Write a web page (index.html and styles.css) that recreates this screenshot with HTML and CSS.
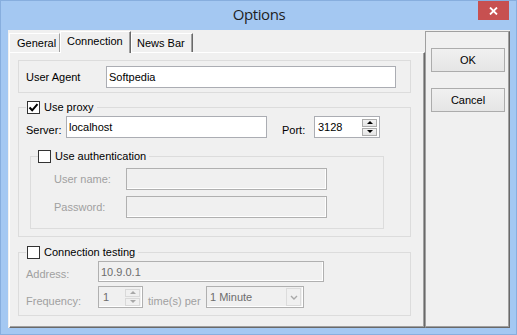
FILE: index.html
```html
<!DOCTYPE html>
<html lang="en">
<head>
    <meta charset="UTF-8">
    <title>Options</title>
    <link rel="stylesheet" href="styles.css">
</head>
<body>
    <div class="window">
        <div class="titlebar">
            <span></span>
            <span class="title">Options</span>
            <button class="close-btn" type="button">
                <svg width="9" height="8" viewBox="0 0 9 8"><path d="M1 0.5L8 7.5M8 0.5L1 7.5" stroke="#fff" stroke-width="1.8" fill="none"/></svg>
            </button>
        </div>
        <div class="client">
            <div class="tabctl">
                <div class="tabstrip">
                    <div class="tab tab-general">General</div>
                    <div class="tab tab-active">Connection</div>
                    <div class="tab tab-news">News Bar</div>
                </div>
                <div class="page">
                    <div class="ua-group">
                        <label class="ua-label" for="ua">User Agent</label>
                        <input class="text ua-input" id="ua" value="Softpedia">
                    </div>

                    <fieldset class="group proxy-group">
                        <legend>
                            <span class="check">
                                <svg width="11" height="11" viewBox="0 0 11 11"><path d="M1.5 5.5L4.2 8.3L9.5 2.2" stroke="#000" stroke-width="2" fill="none"/></svg>
                            </span>Use proxy
                        </legend>
                        <div class="row">
                            <label class="lbl low server-label">Server:</label>
                            <input class="text server-input" value="localhost">
                            <label class="lbl low port-label">Port:</label>
                            <div class="spin port-spin">
                                <input value="3128">
                                <div class="spin-btns">
                                    <span class="spin-btn"><i class="arrow-up"></i></span>
                                    <span class="spin-btn"><i class="arrow-down"></i></span>
                                </div>
                            </div>
                        </div>

                        <fieldset class="group auth-group">
                            <legend><span class="check"></span>Use authentication</legend>
                            <div class="row">
                                <label class="lbl dis auth-label">User name:</label>
                                <input class="text disabled auth-input" disabled>
                            </div>
                            <div class="row auth-row">
                                <label class="lbl dis auth-label">Password:</label>
                                <input class="text disabled auth-input" disabled>
                            </div>
                        </fieldset>
                    </fieldset>

                    <fieldset class="group test-group">
                        <legend><span class="check"></span>Connection testing</legend>
                        <div class="row addr-row">
                            <label class="lbl dis test-label addr-label">Address:</label>
                            <input class="text disabled addr-input" value="10.9.0.1" disabled>
                        </div>
                        <div class="row freq-row">
                            <label class="lbl dis test-label freq-label">Frequency:</label>
                            <div class="spin disabled freq-spin">
                                <input value="1" disabled>
                                <div class="spin-btns">
                                    <span class="spin-btn"><i class="arrow-up"></i></span>
                                    <span class="spin-btn"><i class="arrow-down"></i></span>
                                </div>
                            </div>
                            <span class="lbl dis per-label">time(s) per</span>
                            <div class="select disabled">
                                <span class="select-value">1 Minute</span>
                                <span class="drop">
                                    <svg width="8" height="5" viewBox="0 0 8 5"><path d="M1 1L4 4L7 1" stroke="#a8a8a8" stroke-width="1.4" fill="none"/></svg>
                                </span>
                            </div>
                        </div>
                    </fieldset>
                </div>
            </div>
            <div class="side">
                <button class="btn" type="button">OK</button>
                <button class="btn" type="button">Cancel</button>
            </div>
        </div>
    </div>
</body>
</html>
```

FILE: styles.css
```css
* {
    box-sizing: border-box;
}
body {
    margin: 0;
    font-family: "Liberation Sans", Arial, sans-serif;
    font-size: 11px;
    color: #000;
}
.window {
    width: 517px;
    height: 335px;
    background-color: #a4c8f2;
    border: 1px solid #87aede;
    padding: 0 6px 6px 7px;
    display: flex;
    flex-direction: column;
}
.titlebar {
    height: 29px;
    display: grid;
    grid-template-columns: 1fr auto 1fr;
    align-items: start;
}
.title {
    font-family: "Open Sans", "Noto Sans", sans-serif;
    font-size: 15px;
    letter-spacing: -0.4px;
    line-height: 27px;
    color: #1e1e1e;
}
.close-btn {
    justify-self: end;
    width: 31px;
    height: 19px;
    margin-right: 1px;
    border: none;
    padding: 0;
    background-color: #c75050;
    display: flex;
    align-items: center;
    justify-content: center;
}
.client {
    flex: 1;
    background-color: #f0f0f0;
    display: flex;
    padding: 1px 0 0 1px;
}

/* tabs */
.tabctl {
    width: 416px;
    display: flex;
    flex-direction: column;
}
.tabstrip {
    height: 21px;
    display: flex;
    align-items: flex-end;
}
.tab {
    height: 19px;
    line-height: 18px;
    background-color: #f0f0f0;
    border-top: 1px solid #fff;
    border-left: 1px solid #fff;
    border-right: 1px solid #a0a0a0;
}
.tab-general {
    width: 51px;
    padding-left: 7px;
}
.tab-active {
    position: relative;
    z-index: 1;
    width: 71px;
    height: 22px;
    margin-bottom: -1px;
    padding-left: 6px;
    line-height: 19px;
    border-right: 1px solid #696969;
    box-shadow: inset -1px 0 0 #a0a0a0;
}
.tab-news {
    width: 62px;
    padding-left: 5px;
    border-right: 1px solid #696969;
    box-shadow: inset -1px 0 0 #a0a0a0;
}
.page {
    flex: 1;
    border-top: 1px solid #fff;
    border-left: 1px solid #fff;
    border-right: 1px solid #696969;
    border-bottom: 1px solid #696969;
    box-shadow: inset -1px -1px 0 #a0a0a0;
    padding: 7px 13px 0 8px;
    display: flex;
    flex-direction: column;
}

/* inputs */
.text {
    height: 22px;
    border: 1px solid #abadb3;
    background-color: #fff;
    font-family: inherit;
    font-size: 11px;
    color: #000;
    padding: 0 2px;
    outline: none;
}
.text.disabled,
.spin.disabled,
.select.disabled {
    background-color: #f0f0f0;
    border: 1px solid #b0b0b0;
    box-shadow: inset -1px -1px 0 #fff;
    color: #6d6d6d;
}
.lbl {
    line-height: 13px;
}
.dis {
    color: #a0a0a0;
}
.row {
    display: flex;
    align-items: center;
    height: 22px;
}

/* groups */
.ua-group {
    display: flex;
    align-items: center;
    border: 1px solid #dcdcdc;
    padding: 5px 14px 4px 7px;
}
.ua-label {
    width: 80px;
}
.ua-input {
    flex: 1;
}
.group {
    margin: 0;
    min-width: 0;
    border: 1px solid #dcdcdc;
}
.group legend {
    display: flex;
    align-items: center;
    height: 14px;
    line-height: 14px;
    padding: 0 3px 0 1px;
}
.check {
    width: 13px;
    height: 13px;
    margin-right: 4px;
    border: 1px solid #333;
    background-color: #fff;
    display: flex;
    align-items: center;
    justify-content: center;
}
.proxy-group {
    margin-top: 7px;
    padding: 2px 0 7px 7px;
}
.low {
    align-self: flex-start;
    margin-top: 8px;
}
.server-label {
    width: 40px;
}
.server-input {
    width: 201px;
}
.port-label {
    width: 32px;
    margin-left: 15px;
}

/* spinners */
.spin {
    display: flex;
    align-items: center;
    height: 22px;
    border: 1px solid #abadb3;
    background-color: #fff;
    padding: 0 2px 0 2px;
}
.spin input {
    flex: 1;
    width: 0;
    border: none;
    background: transparent;
    font-family: inherit;
    font-size: 11px;
    color: inherit;
    padding: 0 1px;
    outline: none;
}
.port-spin {
    width: 66px;
}
.freq-spin {
    width: 45px;
    padding-left: 3px;
}
.spin-btns {
    display: flex;
    flex-direction: column;
    gap: 1px;
}
.spin-btn {
    width: 15px;
    height: 8px;
    border: 1px solid #acacac;
    background: linear-gradient(#f2f2f2, #e5e5e5);
    display: flex;
    align-items: center;
    justify-content: center;
}
.arrow-up {
    border-left: 3px solid transparent;
    border-right: 3px solid transparent;
    border-bottom: 3px solid #000;
}
.arrow-down {
    border-left: 3px solid transparent;
    border-right: 3px solid transparent;
    border-top: 3px solid #000;
}
.freq-spin .spin-btn {
    border-color: #d9d9d9;
    background: #f0f0f0;
}
.freq-spin .arrow-up {
    border-bottom-color: #a8a8a8;
}
.freq-spin .arrow-down {
    border-top-color: #a8a8a8;
}

/* authentication */
.auth-group {
    width: 354px;
    margin: 11px 0 0 4px;
    padding: 5px 0 10px 7px;
}
.auth-group legend {
    padding: 0 3px 0 0;
}
.auth-row {
    margin-top: 6px;
}
.auth-label {
    width: 72px;
    margin-left: 16px;
}
.auth-input {
    width: 201px;
}

/* connection testing */
.test-group {
    margin-top: 8px;
    padding: 2px 0 7px 7px;
}
.addr-row {
    height: 21px;
}
.freq-row {
    margin-top: 4px;
}
.test-label {
    width: 72px;
    align-self: flex-start;
}
.addr-label {
    margin-top: 7px;
}
.freq-label {
    margin-top: 9px;
}
.addr-input {
    width: 226px;
    height: 21px;
}
.per-label {
    width: 58px;
    margin-left: 5px;
    align-self: flex-start;
    margin-top: 9px;
}
.select {
    width: 98px;
    height: 22px;
    display: flex;
    align-items: center;
    padding: 0 2px 0 3px;
}
.select-value {
    flex: 1;
}
.drop {
    width: 15px;
    height: 18px;
    border: 1px solid #dcdcdc;
    display: flex;
    align-items: center;
    justify-content: center;
}

/* side buttons */
.side {
    width: 85px;
    border-top: 1px solid #a0a0a0;
    border-left: 1px solid #a0a0a0;
    border-right: 1px solid #696969;
    border-bottom: 1px solid #696969;
    box-shadow: inset -1px -1px 0 #a0a0a0;
    display: flex;
    flex-direction: column;
    align-items: flex-start;
    gap: 16px;
    padding: 16px 0 0 5px;
}
.btn {
    width: 74px;
    height: 24px;
    border: 1px solid #acacac;
    background: linear-gradient(#f0f0f0, #e5e5e5);
    font-family: inherit;
    font-size: 11px;
    color: #000;
    padding: 0;
}
```
